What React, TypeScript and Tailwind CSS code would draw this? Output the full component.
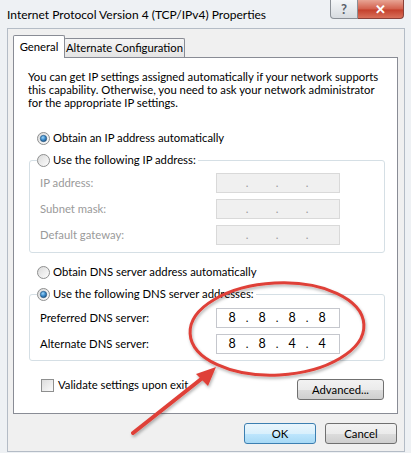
import React from "react";

const font = { fontFamily: 'Lato, "Noto Sans", sans-serif' };

function Radio({ checked }: { checked?: boolean }) {
  return (
    <svg width="13" height="13" viewBox="0 0 13 13" className="shrink-0">
      <defs>
        <linearGradient id={checked ? "rg1" : "rg0"} x1="0" y1="0" x2="1" y2="1">
          <stop offset="0" stopColor="#d8d8d8" />
          <stop offset="1" stopColor="#ffffff" />
        </linearGradient>
        <radialGradient id="dot" cx="0.4" cy="0.35" r="0.7">
          <stop offset="0" stopColor="#9fd5f7" />
          <stop offset="0.5" stopColor="#3f8fcf" />
          <stop offset="1" stopColor="#1d4f7d" />
        </radialGradient>
      </defs>
      <circle cx="6.5" cy="6.5" r="6" fill={`url(#${checked ? "rg1" : "rg0"})`} stroke="#8e8f8f" strokeWidth="1" />
      {checked && <circle cx="6.5" cy="6.5" r="3.2" fill="url(#dot)" stroke="#21517a" strokeWidth="0.6" />}
    </svg>
  );
}

function IpBox({ octets, disabled }: { octets: string[]; disabled?: boolean }) {
  return (
    <div
      className={`flex h-[20px] w-[124px] items-center border ${
        disabled ? "border-[#d9d9d9] bg-[#f0f0f0] text-[#9a9a9a]" : "border-[#c5c7cd] bg-white text-black"
      }`}
    >
      {octets.map((o, i) => (
        <React.Fragment key={i}>
          <span className="w-[30px] text-center text-[12.5px]">{o}</span>
          {i < 3 && <span className="flex w-0 justify-center">.</span>}
        </React.Fragment>
      ))}
    </div>
  );
}

function Row({ label, octets, disabled }: { label: string; octets: string[]; disabled?: boolean }) {
  return (
    <div className="flex items-center">
      <span className={`w-[176px] ${disabled ? "text-[#9a9a9a]" : "text-black"}`}>{label}</span>
      <IpBox octets={octets} disabled={disabled} />
    </div>
  );
}

const btn =
  "flex items-center justify-center rounded-[3px] border border-[#707070] bg-[linear-gradient(#f2f2f2_0%,#ebebeb_50%,#dddddd_51%,#cfcfcf_100%)] text-black";

export default function App() {
  return (
    <div
      className="relative h-[453px] w-[411px] overflow-hidden bg-[#eef1f4] text-[11.3px] leading-[16px] text-black"
      style={font}
    >
      {/* title bar */}
      <div className="flex h-[28px] items-start">
        <span className="whitespace-nowrap pl-[7px] pt-[7px] text-[12px]">
          Internet Protocol Version 4 (TCP/IPv4) Properties
        </span>
        <div className="ml-auto mr-[7px] flex">
          <div className="flex h-[19px] w-[28px] items-center justify-center rounded-bl-[4px] border border-t-0 border-[#8a8f96] bg-[linear-gradient(#f4f6f8,#d7dbe0)] text-[13px] font-bold text-[#5b6069]">
            ?
          </div>
          <div className="flex h-[19px] w-[46px] items-center justify-center rounded-br-[4px] border border-l-0 border-t-0 border-[#8a4038] bg-[linear-gradient(#e8a494,#d2604c_50%,#c4402c_55%,#d8705a)] text-[13px] font-bold text-white">
            ✕
          </div>
        </div>
      </div>

      {/* client area */}
      <div className="ml-[7px] h-[424px] w-[398px] border border-[#b4bcc6] bg-[#f0f0f0]">
        <div className="ml-[5px] flex h-[28px] items-end pt-[6px]">
          <div className="relative z-10 -mb-px flex h-[23px] w-[52px] items-start justify-center whitespace-nowrap rounded-t-[2px] border border-b-0 border-[#898c95] bg-white pt-[3px]">
            General
          </div>
          <div className="-ml-px flex h-[19px] w-[121px] items-center justify-center whitespace-nowrap rounded-t-[2px] border border-b-0 border-[#898c95] bg-[linear-gradient(#f5f5f5,#e4e4e4)]">
            Alternate Configuration
          </div>
        </div>

        <div className="ml-[5px] flex h-[357px] w-[385px] flex-col border border-[#898c95] bg-white">
          <p className="whitespace-nowrap pl-[14px] pt-[12px] leading-[13px]">
            You can get IP settings assigned automatically if your network supports
            <br />
            this capability. Otherwise, you need to ask your network administrator
            <br />
            for the appropriate IP settings.
          </p>

          <div className="ml-[23px] mt-[21px] flex h-[16px] items-center gap-[3px]">
            <Radio checked />
            <span>Obtain an IP address automatically</span>
          </div>

          <fieldset className="ml-[15px] mt-[6px] w-[356px] rounded-[3px] border border-[#d5dfe5] pb-[7px] pl-[10px]">
            <legend className="-ml-[3px] flex h-[16px] items-center gap-[3px] bg-white pr-[2px]">
              <Radio />
              <span>Use the following IP address:</span>
            </legend>
            <div className="mt-[5px] flex flex-col gap-[6px]">
              <Row label="IP address:" octets={["", "", "", ""]} disabled />
              <Row label="Subnet mask:" octets={["", "", "", ""]} disabled />
              <Row label="Default gateway:" octets={["", "", "", ""]} disabled />
            </div>
          </fieldset>

          <div className="ml-[23px] mt-[11px] flex h-[16px] items-center gap-[3px]">
            <Radio />
            <span>Obtain DNS server address automatically</span>
          </div>

          <fieldset className="ml-[15px] mt-[6px] w-[356px] rounded-[3px] border border-[#d5dfe5] pb-[6px] pl-[10px]">
            <legend className="-ml-[3px] flex h-[16px] items-center gap-[3px] bg-white pr-[2px]">
              <Radio checked />
              <span>Use the following DNS server addresses:</span>
            </legend>
            <div className="mt-[6px] flex flex-col gap-[6px]">
              <Row label="Preferred DNS server:" octets={["8", "8", "8", "8"]} />
              <Row label="Alternate DNS server:" octets={["8", "8", "4", "4"]} />
            </div>
          </fieldset>

          <div className="mt-[16px] flex items-start">
            <div className="ml-[27px] flex h-[16px] items-center gap-[4px]">
              <span className="h-[13px] w-[13px] border border-[#8e8f8f] bg-[linear-gradient(135deg,#dcdcdc,#fbfbfb)]" />
              <span>Validate settings upon exit</span>
            </div>
            <div className={`${btn} ml-auto mr-[13px] mt-[2px] h-[21px] w-[87px]`}>Advanced...</div>
          </div>
        </div>

        <div className="mr-[7px] mt-[9px] flex justify-end gap-[9px]">
          <div className="flex h-[21px] w-[72px] items-center justify-center rounded-[3px] border border-[#3c7fb1] bg-[linear-gradient(#eaf6fd_0%,#d9f0fc_50%,#bee6fd_51%,#a7d9f5_100%)]">
            OK
          </div>
          <div className={`${btn} h-[21px] w-[72px]`}>Cancel</div>
        </div>
      </div>

      {/* red annotation */}
      <svg className="pointer-events-none absolute left-0 top-0" width="411" height="453">
        <defs>
          <filter id="sh" x="-20%" y="-20%" width="140%" height="140%">
            <feDropShadow dx="1" dy="2" stdDeviation="1.5" floodColor="#000" floodOpacity="0.3" />
          </filter>
        </defs>
        <g filter="url(#sh)">
          <ellipse cx="277" cy="329" rx="87" ry="46" fill="none" stroke="#df4038" strokeWidth="3" transform="rotate(-3 277 329)" />
          <line x1="133" y1="433" x2="205" y2="376" stroke="#df4038" strokeWidth="4" strokeLinecap="round" />
          <polygon points="216,367 196,374 208,386" fill="#df4038" />
        </g>
      </svg>
    </div>
  );
}
